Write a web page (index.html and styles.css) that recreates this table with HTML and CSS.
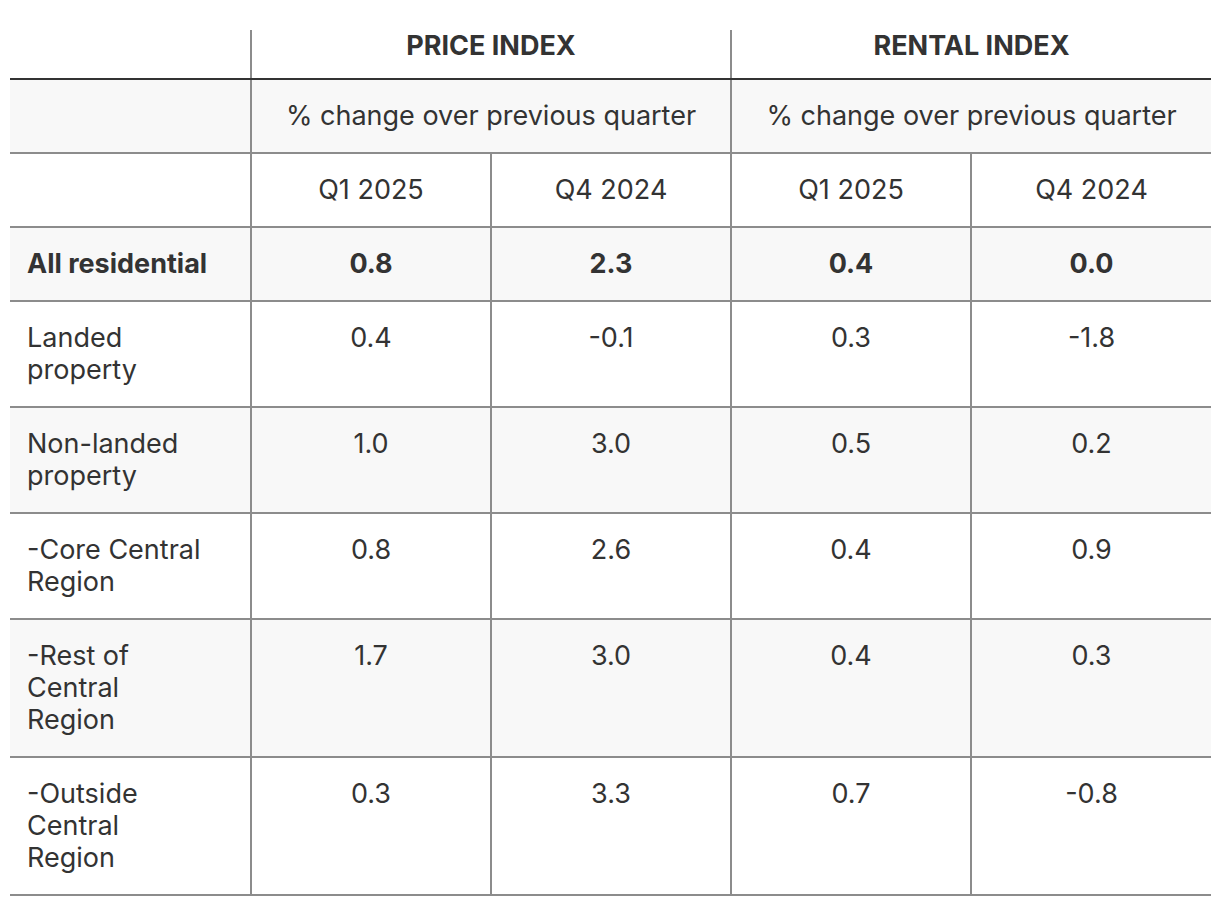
FILE: index.html
```html
<!DOCTYPE html>
<html lang="en">
<head>
<meta charset="utf-8">
<title>Residential Property Index</title>
<link rel="stylesheet" href="styles.css">
</head>
<body>
<div class="page">
<table class="idx">
  <colgroup>
    <col class="c-label">
    <col class="c-num"><col class="c-num"><col class="c-num"><col class="c-num">
  </colgroup>
  <thead>
    <tr class="r-head">
      <th class="blank"></th>
      <th colspan="2" class="grp">PRICE INDEX</th>
      <th colspan="2" class="grp">RENTAL INDEX</th>
    </tr>
  </thead>
  <tbody>
    <tr class="shade">
      <td class="label"></td>
      <td colspan="2" class="num">% change over previous quarter</td>
      <td colspan="2" class="num">% change over previous quarter</td>
    </tr>
    <tr>
      <td class="label"></td>
      <td class="num">Q1 2025</td>
      <td class="num">Q4 2024</td>
      <td class="num">Q1 2025</td>
      <td class="num">Q4 2024</td>
    </tr>
    <tr class="shade strong">
      <td class="label">All residential</td>
      <td class="num">0.8</td>
      <td class="num">2.3</td>
      <td class="num">0.4</td>
      <td class="num">0.0</td>
    </tr>
    <tr>
      <td class="label">Landed property</td>
      <td class="num">0.4</td>
      <td class="num">-0.1</td>
      <td class="num">0.3</td>
      <td class="num">-1.8</td>
    </tr>
    <tr class="shade">
      <td class="label">Non-landed property</td>
      <td class="num">1.0</td>
      <td class="num">3.0</td>
      <td class="num">0.5</td>
      <td class="num">0.2</td>
    </tr>
    <tr>
      <td class="label">-Core Central Region</td>
      <td class="num">0.8</td>
      <td class="num">2.6</td>
      <td class="num">0.4</td>
      <td class="num">0.9</td>
    </tr>
    <tr class="shade">
      <td class="label">-Rest of Central Region</td>
      <td class="num">1.7</td>
      <td class="num">3.0</td>
      <td class="num">0.4</td>
      <td class="num">0.3</td>
    </tr>
    <tr>
      <td class="label">-Outside Central Region</td>
      <td class="num">0.3</td>
      <td class="num">3.3</td>
      <td class="num">0.7</td>
      <td class="num">-0.8</td>
    </tr>
  </tbody>
</table>
</div>
</body>
</html>
```
FILE: styles.css
```css
html, body {
  margin: 0;
  padding: 0;
  background: #ffffff;
}

.page {
  padding: 30px 10px 0 10px;
}

.idx {
  width: 1200px;
  border-collapse: collapse;
  table-layout: fixed;
  font-family: Inter, "Noto Sans", sans-serif;
  font-size: 27px;
  line-height: 32px;
  color: #333333;
}

.c-label { width: 241px; }
.c-num { width: 240px; }

.idx th,
.idx td {
  padding: 20px 40px 20px 17px;
  vertical-align: top;
  border-bottom: 2px solid #8c8c8c;
  font-weight: 400;
}

.idx td + td,
.idx th + th {
  border-left: 2px solid #8c8c8c;
}

.idx .num {
  text-align: center;
  padding-left: 10px;
  padding-right: 10px;
}

.r-head th {
  padding: 0 10px 16px 10px;
  border-bottom: 2px solid #333333;
  font-weight: 700;
  text-align: center;
}

.shade td {
  background: #f8f8f8;
}

.strong td {
  font-weight: 700;
}
```
